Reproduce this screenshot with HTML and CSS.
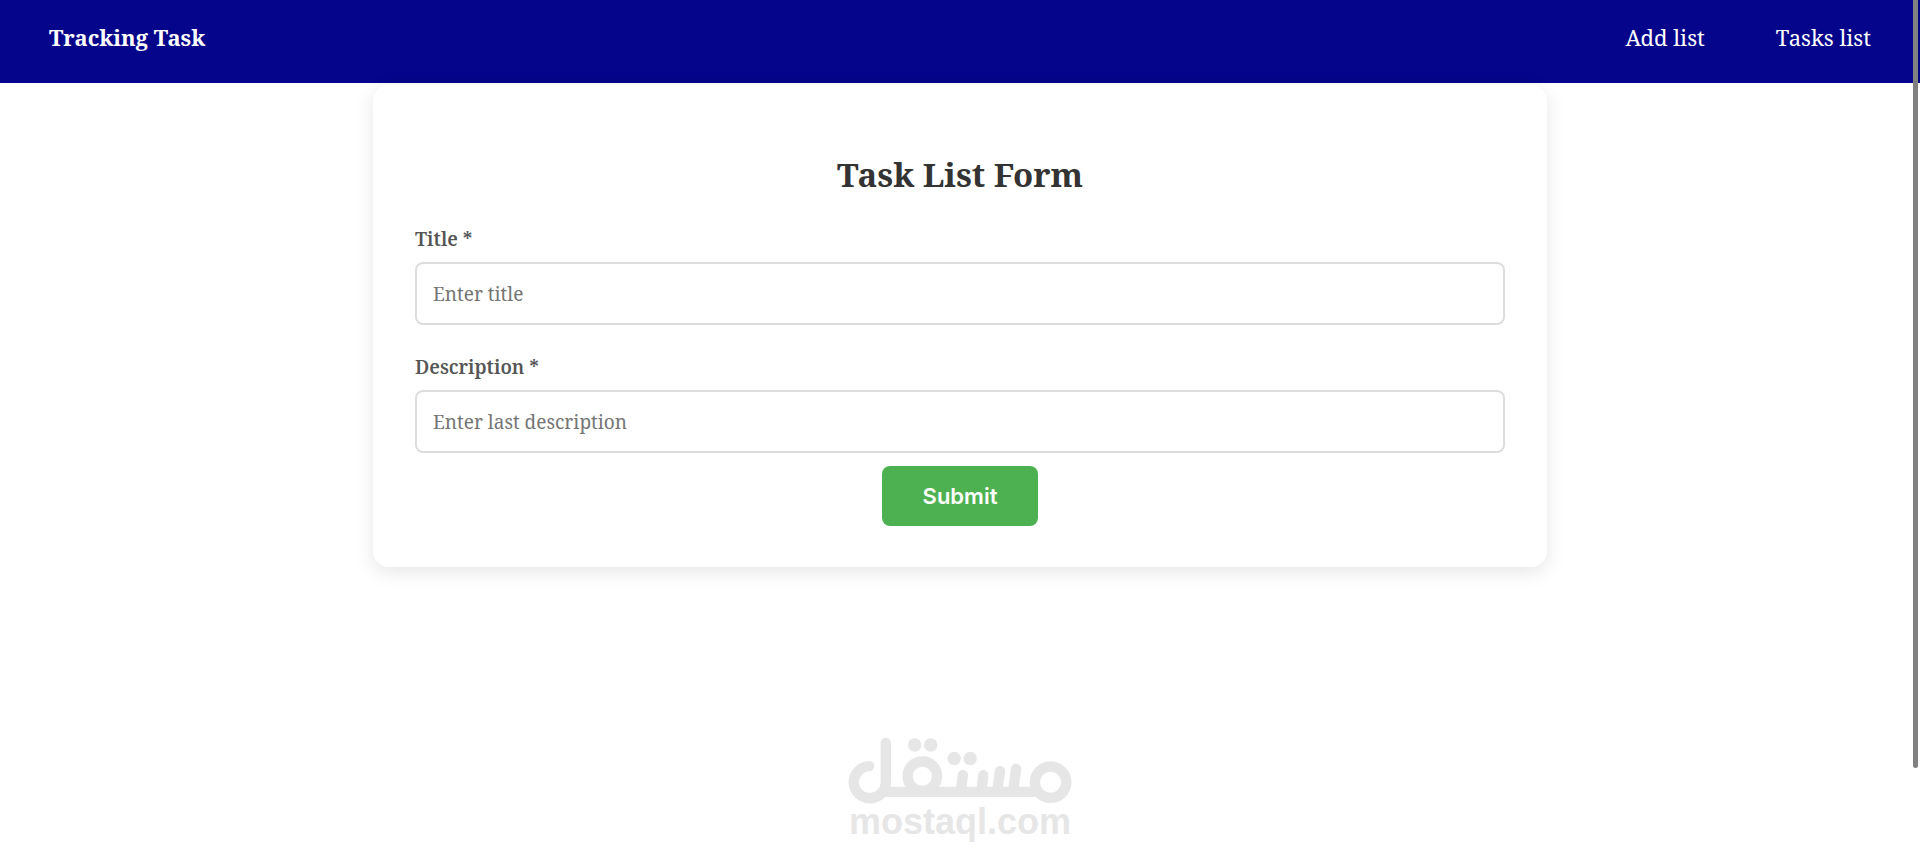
FILE: index.html
```html
<!DOCTYPE html>
<html lang="en">
<head>
    <meta charset="UTF-8">
    <meta name="viewport" content="width=device-width, initial-scale=1.0">
    <title>Tracking Task</title>
    <link rel="stylesheet" href="styles.css">
</head>
<body>
    <header class="navbar">
        <a class="brand" href="#">Tracking Task</a>
        <nav class="nav-links">
            <a href="#">Add list</a>
            <a href="#">Tasks list</a>
        </nav>
    </header>

    <main class="form-container">
        <h2>Task List Form</h2>
        <form>
            <div class="form-group">
                <label for="title">Title *</label>
                <input type="text" id="title" name="title" placeholder="Enter title" required>
            </div>

            <div class="form-group">
                <label for="description">Description *</label>
                <input type="text" id="description" name="description" placeholder="Enter last description" required>
            </div>

            <button type="submit" class="submit-btn">Submit</button>
        </form>
    </main>

    <div class="watermark">
        <svg class="watermark-logo" viewBox="84 54 669 196" fill="none" stroke="currentColor" stroke-width="31" stroke-linecap="round" aria-hidden="true">
            <path d="M147 138A48 48 0 1 0 197 187V69"/>
            <path d="M190 215H650" stroke-linecap="butt"/>
            <circle cx="306" cy="168" r="44"/>
            <circle cx="689" cy="186" r="47"/>
            <path d="M427 165L421 212M488 165L483 212M538 153L530 212M586 146L577 212"/>
            <g fill="currentColor" stroke="none">
                <circle cx="283" cy="75" r="20"/>
                <circle cx="331" cy="75" r="20"/>
                <circle cx="401" cy="115" r="20"/>
                <circle cx="449" cy="115" r="20"/>
            </g>
        </svg>
        <span class="watermark-text">mostaql.com</span>
    </div>

    <div class="scroll-thumb"></div>
</body>
</html>
```
FILE: styles.css
```css
* {
    box-sizing: border-box;
}

body {
    font-family: 'Noto Serif', serif;
    background-color: #fff;
    margin: 0;
}

.navbar {
    display: flex;
    justify-content: space-between;
    align-items: center;
    background-color: #05058b;
    padding: 21px 49px 30px;
    font-size: 22px;
    line-height: 32px;
}

.navbar a {
    color: white;
    text-decoration: none;
}

.navbar .brand {
    font-weight: bold;
}

.nav-links {
    display: flex;
    gap: 71px;
}

.form-container {
    max-width: 1174px;
    margin: 2px auto 0;
    padding: 68px 42px 41px;
    background-color: #fff;
    border-radius: 16px;
    box-shadow: 0 5px 20px rgba(0, 0, 0, 0.1);
}

h2 {
    margin: 0 0 29px;
    font-size: 33px;
    line-height: 44px;
    text-align: center;
    color: #333;
}

.form-group {
    margin-bottom: 29px;
}

.form-group:last-of-type {
    margin-bottom: 13px;
}

label {
    display: block;
    margin-bottom: 10px;
    font-size: 19px;
    line-height: 26px;
    font-weight: 600;
    color: #555;
}

input {
    display: block;
    width: 100%;
    height: 63px;
    padding: 0 16px;
    border: 2px solid #ddd;
    border-radius: 8px;
    background-color: #fff;
    font-family: inherit;
    font-size: 19px;
}

input::placeholder {
    color: #757575;
}

input:focus {
    outline: none;
    border-color: #4caf50;
}

.submit-btn {
    display: block;
    margin: 0 auto;
    padding: 15px 41px;
    border: none;
    border-radius: 8px;
    background-color: #4eb151;
    color: white;
    font-family: Inter, sans-serif;
    font-size: 22px;
    font-weight: 600;
    line-height: 30px;
    cursor: pointer;
}

.submit-btn:hover {
    background-color: #45a049;
}

.watermark {
    display: flex;
    flex-direction: column;
    align-items: center;
    margin: 171px 0 16px;
    color: #e6e6e6;
}

.watermark-logo {
    width: 224px;
}

.watermark-text {
    font-family: 'Liberation Sans', Arial, sans-serif;
    font-size: 36px;
    line-height: 36px;
    font-weight: bold;
}

.scroll-thumb {
    position: fixed;
    top: 0;
    right: 2px;
    width: 5px;
    height: 768px;
    border-radius: 0 0 3px 3px;
    background-color: #808080;
}
```
